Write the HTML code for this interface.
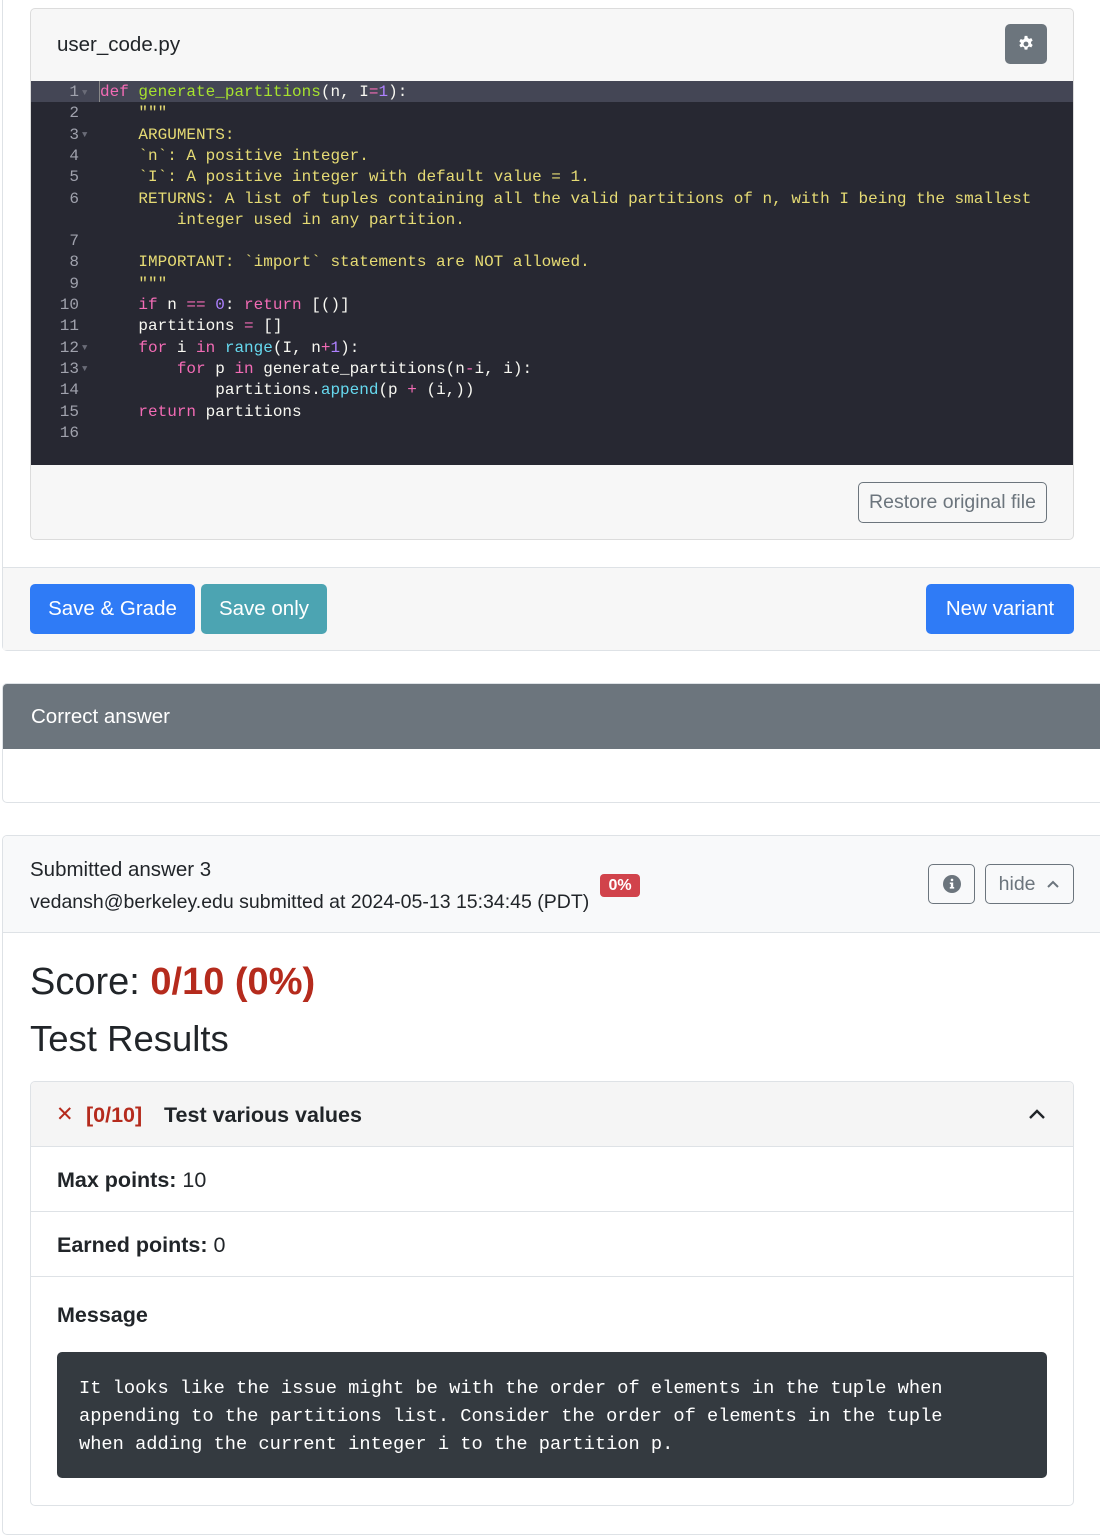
<!DOCTYPE html>
<html><head><meta charset="utf-8">
<style>
*{box-sizing:border-box;margin:0;padding:0}
body{width:1100px;height:1510px;background:#fff;font-family:"Liberation Sans",sans-serif;color:#212529;position:relative;overflow:hidden}
.abs{position:absolute}
.btn{position:absolute;border-radius:5px;font-size:20.5px;display:flex;align-items:center;justify-content:center}
.code{position:absolute;left:31px;top:81px;width:1042px;height:384px;background:#272832;font-family:"Liberation Mono",monospace;font-size:16px;line-height:21.3px;color:#f8f8f2}
.ln{position:absolute;left:0;width:48px;text-align:right;color:#a0a2ad}
.tx{position:absolute;left:69px;white-space:pre}
.k{color:#f36bb5}.f{color:#a6e22e}.s{color:#e6db74}.n{color:#ae81ff}.b{color:#66d9ef}
.fold{color:#6a6c78;font-size:9px;position:absolute;left:51px}
</style></head><body>
<div class="abs" style="left:2px;top:-10px;width:1110px;height:661px;border:1px solid #dee2e6;border-radius:5px"></div>
<div class="abs" style="left:3px;top:567px;width:1110px;height:83px;background:#f7f7f7;border-top:1px solid #dee2e6"></div>
<div class="abs" style="left:30px;top:8px;width:1044px;height:532px;border:1px solid #dcdcdc;border-radius:5px;background:#f7f7f7;overflow:hidden"></div>
<div class="abs" style="left:57px;top:33px;font-size:20.5px;color:#212529">user_code.py</div>
<div class="btn" style="left:1005px;top:24px;width:42px;height:40px;background:#6c757d">
<svg width="18" height="18" viewBox="0 0 20 20"><path fill="#fff" d="M8.5 1h3l.5 2.4 1.6.9 2.3-.8 1.5 2.6-1.8 1.6v1.8l1.8 1.6-1.5 2.6-2.3-.8-1.6.9-.5 2.4h-3l-.5-2.4-1.6-.9-2.3.8-1.5-2.6 1.8-1.6V8.7L2.6 7.1l1.5-2.6 2.3.8 1.6-.9z M10 7.3a2.7 2.7 0 1 0 0 5.4a2.7 2.7 0 1 0 0-5.4z" fill-rule="evenodd"/></svg></div>
<div class="code">
<div class="abs" style="left:0;top:0;width:1042px;height:21px;background:#444655"></div>
<div class="abs" style="left:68px;top:0;width:1px;height:21px;background:#888"></div>
<div style="position:absolute;left:0;top:1px;width:1042px">
<div class="ln" style="top:0">1</div><span class="fold" style="top:1px">▼</span><div class="tx" style="top:0"><span class="k">def</span> <span class="f">generate_partitions</span>(n, I<span class="k">=</span><span class="n">1</span>):</div>
<div class="ln" style="top:21.3px">2</div><div class="tx s" style="top:21.3px">    """</div>
<div class="ln" style="top:42.6px">3</div><span class="fold" style="top:43px">▼</span><div class="tx s" style="top:42.6px">    ARGUMENTS:</div>
<div class="ln" style="top:63.9px">4</div><div class="tx s" style="top:63.9px">    `n`: A positive integer.</div>
<div class="ln" style="top:85.2px">5</div><div class="tx s" style="top:85.2px">    `I`: A positive integer with default value = 1.</div>
<div class="ln" style="top:106.5px">6</div><div class="tx s" style="top:106.5px">    RETURNS: A list of tuples containing all the valid partitions of n, with I being the smallest
        integer used in any partition.</div>
<div class="ln" style="top:149.1px">7</div>
<div class="ln" style="top:170.4px">8</div><div class="tx s" style="top:170.4px">    IMPORTANT: `import` statements are NOT allowed.</div>
<div class="ln" style="top:191.7px">9</div><div class="tx s" style="top:191.7px">    """</div>
<div class="ln" style="top:213px">10</div><div class="tx" style="top:213px">    <span class="k">if</span> n <span class="k">==</span> <span class="n">0</span>: <span class="k">return</span> [()]</div>
<div class="ln" style="top:234.3px">11</div><div class="tx" style="top:234.3px">    partitions <span class="k">=</span> []</div>
<div class="ln" style="top:255.6px">12</div><span class="fold" style="top:256px">▼</span><div class="tx" style="top:255.6px">    <span class="k">for</span> i <span class="k">in</span> <span class="b">range</span>(I, n<span class="k">+</span><span class="n">1</span>):</div>
<div class="ln" style="top:276.9px">13</div><span class="fold" style="top:277px">▼</span><div class="tx" style="top:276.9px">        <span class="k">for</span> p <span class="k">in</span> generate_partitions(n<span class="k">-</span>i, i):</div>
<div class="ln" style="top:298.2px">14</div><div class="tx" style="top:298.2px">            partitions.<span class="b">append</span>(p <span class="k">+</span> (i,))</div>
<div class="ln" style="top:319.5px">15</div><div class="tx" style="top:319.5px">    <span class="k">return</span> partitions</div>
<div class="ln" style="top:340.8px">16</div>
</div>
</div>
<div class="btn" style="left:858px;top:482px;width:189px;height:41px;border:1px solid #6c757d;color:#6c757d;font-size:19.5px">Restore original file</div>
<div class="btn" style="left:30px;top:584px;width:165px;height:50px;background:#2f7bf6;color:#fff">Save &amp; Grade</div>
<div class="btn" style="left:201px;top:584px;width:126px;height:50px;background:#4ca4b2;color:#fff">Save only</div>
<div class="btn" style="left:926px;top:584px;width:148px;height:50px;background:#2f7bf6;color:#fff">New variant</div>
<div class="abs" style="left:2px;top:683px;width:1110px;height:120px;border:1px solid #dee2e6;border-radius:5px;overflow:hidden">
<div style="height:65px;background:#6c757d;color:#fff;font-size:20.5px;padding:21px 0 0 28px">Correct answer</div></div>
<div class="abs" style="left:2px;top:835px;width:1110px;height:700px;border:1px solid #dee2e6;border-radius:5px;overflow:hidden">
<div style="height:97px;background:#f8f9fa;border-bottom:1px solid #dee2e6"></div></div>
<div class="abs" style="left:30px;top:858px;font-size:20.5px">Submitted answer 3</div>
<div class="abs" style="left:30px;top:891px;font-size:19.5px">vedansh@berkeley.edu submitted at 2024-05-13 15:34:45 (PDT)</div>
<div class="abs" style="left:600px;top:874px;width:40px;height:23px;background:#d1434b;border-radius:4px;color:#fff;font-weight:bold;font-size:16px;text-align:center;line-height:23px">0%</div>
<div class="btn" style="left:928px;top:864px;width:47px;height:40px;border:1px solid #6c757d"><svg width="18" height="18" viewBox="0 0 18 18"><circle cx="9" cy="9" r="9" fill="#6c757d"/><rect x="7.8" y="7.5" width="2.4" height="6" fill="#fff"/><rect x="6.8" y="12" width="4.4" height="1.6" fill="#fff"/><rect x="6.8" y="7.5" width="2" height="1.5" fill="#fff"/><circle cx="9" cy="4.9" r="1.3" fill="#fff"/></svg></div>
<div class="btn" style="left:985px;top:864px;width:89px;height:40px;border:1px solid #6c757d;color:#6c757d;font-size:19.5px">hide&nbsp;&nbsp;<svg width="14" height="10" viewBox="0 0 14 10"><path d="M2 8l5-5 5 5" stroke="#6c757d" stroke-width="2" fill="none"/></svg></div>
<div class="abs" style="left:30px;top:961px;font-size:38px;font-weight:500">Score: <span style="color:#b52b1d;font-weight:bold">0/10 (0%)</span></div>
<div class="abs" style="left:30px;top:1018px;font-size:36.5px">Test Results</div>
<div class="abs" style="left:30px;top:1081px;width:1044px;height:425px;border:1px solid #dee2e6;border-radius:5px;overflow:hidden">
<div style="height:65px;background:#f5f5f5;border-bottom:1px solid #dee2e6"></div>
<div style="height:65px;border-bottom:1px solid #dee2e6"></div>
<div style="height:65px;border-bottom:1px solid #dee2e6"></div>
</div>
<div class="abs" style="left:56px;top:1102px;font-size:21px;color:#b52b1d">✕</div>
<div class="abs" style="left:86px;top:1103px;font-size:21.5px;font-weight:bold;color:#b52b1d">[0/10]</div>
<div class="abs" style="left:164px;top:1103px;font-size:21.5px;font-weight:bold">Test various values</div>
<svg class="abs" style="left:1028px;top:1108px" width="18" height="12" viewBox="0 0 18 12"><path d="M2 10l7-7 7 7" stroke="#212529" stroke-width="2.4" fill="none"/></svg>
<div class="abs" style="left:57px;top:1168px;font-size:21.5px"><b>Max points:</b> 10</div>
<div class="abs" style="left:57px;top:1233px;font-size:21.5px"><b>Earned points:</b> 0</div>
<div class="abs" style="left:57px;top:1303px;font-size:21.5px;font-weight:bold">Message</div>
<div class="abs" style="left:57px;top:1352px;width:990px;height:126px;background:#343a40;border-radius:5px;color:#fff;font-family:'Liberation Mono',monospace;font-size:18.7px;line-height:28px;padding:22px 22px;white-space:pre">It looks like the issue might be with the order of elements in the tuple when
appending to the partitions list. Consider the order of elements in the tuple
when adding the current integer i to the partition p.</div>
</body></html>
